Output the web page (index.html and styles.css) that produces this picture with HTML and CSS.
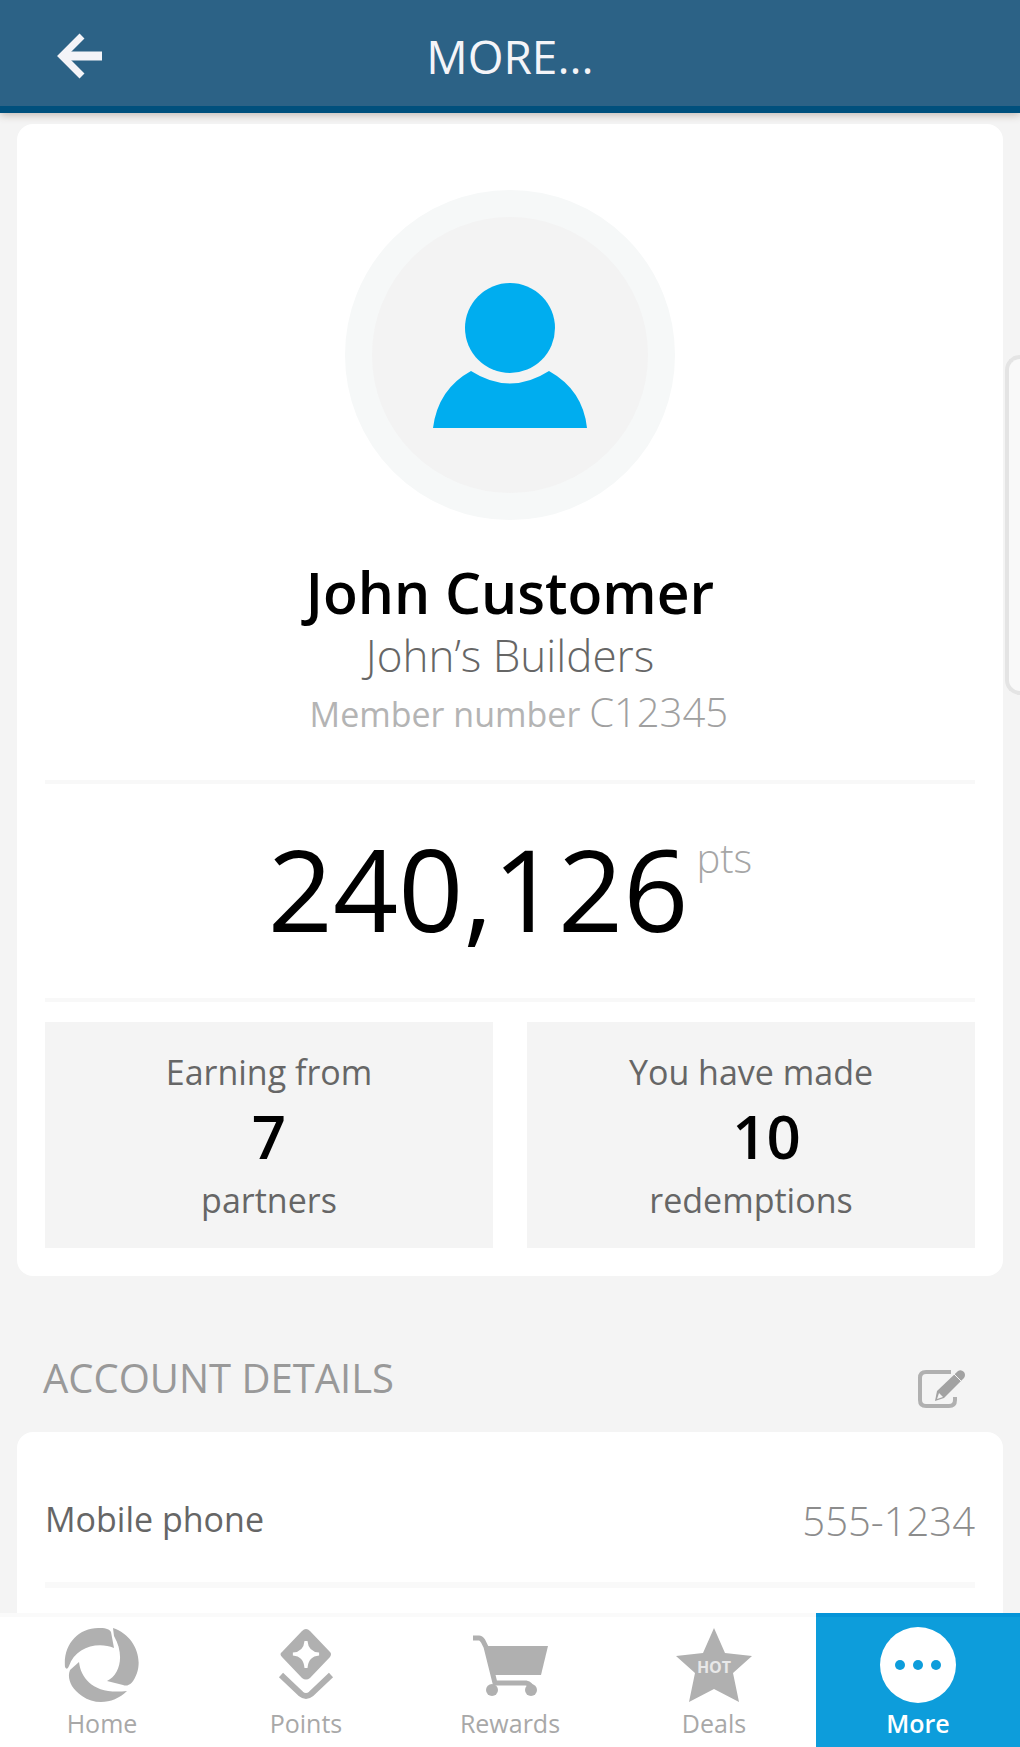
FILE: index.html
```html
<!DOCTYPE html>
<html lang="en">
<head>
    <meta charset="UTF-8">
    <meta name="viewport" content="width=device-width, initial-scale=1.0">
    <title>More</title>
    <link rel="stylesheet" href="styles.css">
</head>
<body>

    <div class="app">
        <!-- Top Bar -->
        <header class="top-bar">
            <button type="button" class="icon-button" aria-label="Back">
                <svg width="48" height="48" viewBox="0 0 48 48" fill="none" stroke="#f4f4f8">
                    <path d="M26 4 L6 24 L26 44" stroke-width="7"/>
                    <path d="M9 24 H46" stroke-width="9"/>
                </svg>
            </button>
            <h1>MORE...</h1>
        </header>

        <main class="content">
            <!-- Profile Card -->
            <section class="card profile">
                <div class="avatar">
                    <svg width="154" height="148" viewBox="0 0 154 148" fill="#00adef">
                        <circle cx="77" cy="47" r="45"/>
                        <path d="M38 90 Q77 115 116 90 Q150 109 154 147 H0 Q5 108 38 90 Z"/>
                    </svg>
                </div>
                <h2>John Customer</h2>
                <p class="company">John’s Builders</p>
                <p class="member">&nbsp;&nbsp;Member number <span class="member-id">C12345</span></p>
                <p class="points">240,126<span class="unit">pts</span></p>
                <div class="stats">
                    <div class="stat">
                        <span>Earning from</span>
                        <strong>7</strong>
                        <span>partners</span>
                    </div>
                    <div class="stat">
                        <span>You have made</span>
                        <strong>&nbsp;&nbsp;10</strong>
                        <span>redemptions</span>
                    </div>
                </div>
            </section>

            <!-- Account Details -->
            <div class="section-header">
                <h3>ACCOUNT DETAILS</h3>
                <button type="button" class="icon-button" aria-label="Edit account details">
                    <svg width="50" height="42" viewBox="0 0 50 42" fill="none" stroke="#b0b0b0">
                        <path d="M34 4 H9 Q3 4 3 10 V32 Q3 38 9 38 H32 Q38 38 38 32 V29" stroke-width="4"/>
                        <path d="M18 33 L20 23 L41 3 Q44 1 47 4 Q49 7 47 10 L27 30 Z" fill="#a2a2a2" stroke="none"/>
                        <path d="M22 25 L26 29 L20 31 Z" fill="#f4f4f4" stroke="none"/>
                        <path d="M37 6 L44 13" stroke="#f4f4f4" stroke-width="1"/>
                    </svg>
                </button>
            </div>
            <dl class="card details">
                <div class="detail-row">
                    <dt>Mobile phone</dt>
                    <dd>555-1234</dd>
                </div>
            </dl>
        </main>

        <div class="side-tab"></div>

        <!-- Bottom Navigation -->
        <nav class="bottom-nav">
            <a href="#home">
                <svg width="76" height="76" viewBox="0 0 76 76" fill="#b0b0b0">
                    <path d="M1 40 C-1 17 15 0 36 1 C43 1 46 3 47 5 L50 21 C34 14 11 20 5 39 Q3 44 1 40 Z"/>
                    <path d="M49 1 C68 7 79 28 73 46 C69 57 64 60 59 58 L43 54 C56 48 61 28 50 9 Z"/>
                    <path d="M15 35 C17 52 30 68 63 64 C51 76 32 79 18 69 C6 61 3 50 6 43 Z"/>
                </svg>
                <span>Home</span>
            </a>
            <a href="#points">
                <svg width="76" height="76" viewBox="0 0 76 76" fill="#b0b0b0">
                    <path d="M38 2 Q40 2 42 4 L62 25 Q64 27 62 30 L42 51 Q38 54 34 51 L14 30 Q11 27 14 25 L34 4 Q36 2 38 2 Z"/>
                    <path d="M38 14 Q39 26 51 27 Q39 28 38 41 Q37 28 25 27 Q37 26 38 14 Z" fill="#ffffff" stroke="#ffffff" stroke-width="3"/>
                    <path d="M13 48 L33 67 Q38 71 43 67 L63 48" fill="none" stroke="#b0b0b0" stroke-width="6"/>
                </svg>
                <span>Points</span>
            </a>
            <a href="#rewards">
                <svg width="76" height="76" viewBox="0 0 76 76" fill="#b0b0b0">
                    <path d="M1 11 H7 Q9 11 11 14 L14 20 L23 56 H54 Q59 57 60 62" fill="none" stroke="#b0b0b0" stroke-width="5"/>
                    <path d="M12 19 H76 L69 48 H20 Z"/>
                    <circle cx="20" cy="63" r="6"/>
                    <circle cx="59" cy="63" r="6"/>
                </svg>
                <span>Rewards</span>
            </a>
            <a href="#deals">
                <svg width="76" height="76" viewBox="0 0 76 76" fill="#b0b0b0">
                    <path d="M38 1 L49 26 L76 29 L57 46 L63 75 L38 62 L13 75 L19 46 L0 29 L27 26 Z"/>
                    <text class="deal-tag" x="38" y="46" text-anchor="middle">HOT</text>
                </svg>
                <span>Deals</span>
            </a>
            <a href="#more" class="active">
                <svg width="76" height="76" viewBox="0 0 76 76" fill="#0d9ddb">
                    <circle cx="38" cy="38" r="38" fill="#ffffff"/>
                    <circle cx="20" cy="38" r="5"/>
                    <circle cx="38" cy="38" r="5"/>
                    <circle cx="56" cy="38" r="5"/>
                </svg>
                <span>More</span>
            </a>
        </nav>
    </div>

</body>
</html>
```
FILE: styles.css
```css
/* Base Styling */
* {
    box-sizing: border-box;
}

body {
    font-family: 'Open Sans', 'Noto Sans', sans-serif;
    background-color: #f4f4f4;
    color: #666;
    margin: 0;
}

h1, h2, h3, p, dl, dd {
    margin: 0;
}

svg {
    display: block;
}

.app {
    position: relative;
    display: flex;
    flex-direction: column;
    height: 100vh;
    overflow: hidden;
}

.icon-button {
    padding: 0;
    border: none;
    background: none;
    cursor: pointer;
}

/* Top Bar */
.top-bar {
    display: grid;
    grid-template-columns: 48px 1fr 48px;
    align-items: center;
    padding: 6px 56px 0;
    background-color: #2c6286;
    border-bottom: 7px solid #00507d;
    box-shadow: 0 2px 8px rgba(80, 50, 30, 0.3);
    z-index: 1;
}

.top-bar h1 {
    font-size: 46px;
    line-height: 100px;
    font-weight: 400;
    color: #f4f4f8;
    text-align: center;
}

/* Cards */
.content {
    flex: 1;
    min-height: 0;
    overflow: hidden;
    padding: 11px 17px 0;
}

.card {
    padding: 0 28px;
    background-color: #fff;
    border-radius: 16px;
}

/* Profile */
.profile {
    padding-top: 66px;
    padding-bottom: 28px;
    text-align: center;
}

.avatar {
    display: flex;
    align-items: center;
    justify-content: center;
    width: 330px;
    height: 330px;
    margin: 0 auto 40px;
    border: 27px solid #f6f8f8;
    border-radius: 50%;
    background-color: #f3f3f3;
}

.profile h2 {
    font-size: 57px;
    line-height: 64px;
    font-weight: 600;
    color: #000;
}

.company {
    font-size: 44px;
    line-height: 62px;
    font-weight: 300;
}

.member {
    padding-bottom: 40px;
    font-size: 34px;
    line-height: 52px;
    color: #b4b4b4;
}

.member-id {
    font-size: 40px;
    font-weight: 300;
    color: #a0a0a0;
}

.points {
    display: flex;
    justify-content: center;
    padding-bottom: 6px;
    border: solid #f8f8f8;
    border-width: 4px 0;
    font-size: 114px;
    line-height: 208px;
    color: #000;
}

.unit {
    padding: 42px 0 0 8px;
    font-size: 40px;
    line-height: 64px;
    font-weight: 300;
    color: #a6a6a6;
}

/* Stats */
.stats {
    display: grid;
    grid-template-columns: 1fr 1fr;
    gap: 34px;
    margin-top: 20px;
}

.stat {
    display: flex;
    flex-direction: column;
    gap: 10px;
    padding: 28px 26px 26px;
    background-color: #f4f4f4;
    font-size: 34px;
    line-height: 44px;
}

.stat strong {
    font-size: 60px;
    line-height: 64px;
    font-weight: 600;
    color: #000;
}

/* Account Details */
.section-header {
    display: flex;
    justify-content: space-between;
    align-items: flex-end;
    padding: 70px 36px 22px 26px;
}

.section-header h3 {
    font-size: 40px;
    line-height: 64px;
    font-weight: 400;
    color: #999;
}

.detail-row {
    display: flex;
    justify-content: space-between;
    align-items: flex-start;
    padding: 59px 0 31px;
    border-bottom: 6px solid #f9f9f9;
}

.detail-row dt {
    font-size: 34px;
    line-height: 56px;
}

.detail-row dd {
    font-size: 40px;
    line-height: 60px;
    font-weight: 300;
    color: #8c8c8c;
}

.details {
    padding-bottom: 60px;
}

/* Handle on the right edge */
.side-tab {
    position: absolute;
    top: 355px;
    right: 0;
    width: 15px;
    height: 340px;
    border: 4px solid #e4e4e4;
    border-right: none;
    border-radius: 20px 0 0 20px;
    background-color: #f9f9f9;
}

/* Bottom Navigation */
.bottom-nav {
    display: grid;
    grid-template-columns: repeat(5, 1fr);
    z-index: 1;
    background-color: #fff;
}

.bottom-nav a {
    display: flex;
    flex-direction: column;
    align-items: center;
    padding: 10px 0 7px;
    border-top: 4px solid #fafafa;
    font-size: 25px;
    line-height: 34px;
    color: #a8a8a8;
    text-decoration: none;
}

.bottom-nav span {
    margin-top: 3px;
}

.bottom-nav .active {
    background-color: #0d9ddb;
    border-top-color: #0594d8;
    color: #fff;
    font-weight: 600;
}

.deal-tag {
    font-size: 16px;
    font-weight: 700;
    fill: #e8e8e8;
}
```
